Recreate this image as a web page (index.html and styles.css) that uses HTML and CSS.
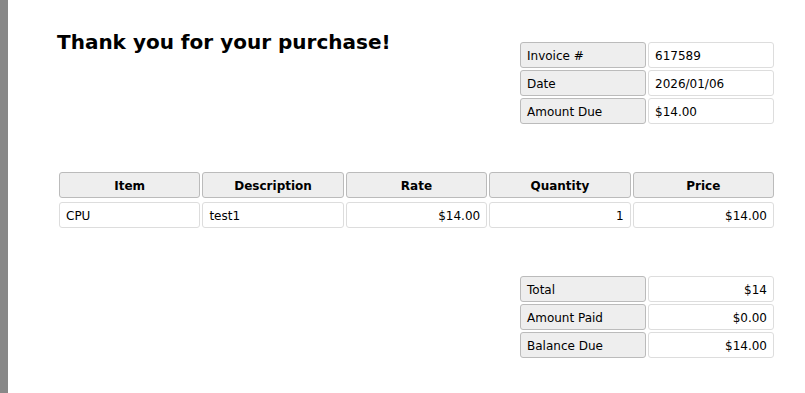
FILE: index.html
```html
<!DOCTYPE html>
<html lang="en">
<head>
  <meta charset="UTF-8">
  <title>Invoice 617589</title>
  <link rel="stylesheet" href="styles.css">
</head>
<body>
  <div class="rail"></div>

  <main class="page">
    <header class="top">
      <h1>Thank you for your purchase!</h1>

      <table class="meta">
        <tr><th>Invoice #</th><td>617589</td></tr>
        <tr><th>Date</th><td>2026/01/06</td></tr>
        <tr><th>Amount Due</th><td>$14.00</td></tr>
      </table>
    </header>

    <table class="items">
      <thead>
        <tr>
          <th>Item</th>
          <th>Description</th>
          <th>Rate</th>
          <th>Quantity</th>
          <th>Price</th>
        </tr>
      </thead>
      <tbody>
        <tr>
          <td>CPU</td>
          <td>test1</td>
          <td class="num">$14.00</td>
          <td class="num">1</td>
          <td class="num">$14.00</td>
        </tr>
      </tbody>
    </table>

    <table class="meta balance">
      <tr><th>Total</th><td class="num">$14</td></tr>
      <tr><th>Amount Paid</th><td class="num">$0.00</td></tr>
      <tr><th>Balance Due</th><td class="num">$14.00</td></tr>
    </table>
  </main>
</body>
</html>
```

FILE: styles.css
```css
* {
  box-sizing: border-box;
}
html, body {
  height: 100%;
}
body {
  margin: 0;
  display: flex;
  background: #fff;
  color: #000;
  font-family: "DejaVu Sans", sans-serif;
}
.rail {
  width: 8px;
  flex: none;
  background: #888;
}
.page {
  flex: 1;
  padding: 0 29px 0 49px;
}

.top {
  display: flex;
  justify-content: space-between;
  align-items: flex-start;
}
.top h1 {
  margin: 30px 0 0;
  font-size: 20px;
  font-weight: bold;
}

table {
  font-size: 12px;
  border-collapse: separate;
  border-spacing: 2px;
  table-layout: fixed;
}
th, td {
  height: 26px;
  padding: 1px 6px 0;
  border: 1px solid #ddd;
  border-radius: 3px;
  text-align: left;
  font-weight: normal;
}
th {
  background: #eee;
  border-color: #bbb;
}
td.num {
  text-align: right;
}

.meta {
  width: 258px;
  margin-top: 40px;
}

.items {
  width: 100%;
  margin-top: 46px;
  border-spacing: 2px 0;
}
.items thead th {
  font-weight: bold;
  text-align: center;
}
/* small gap between the header row and the line items */
.items tbody::before {
  content: "";
  display: table-row;
  height: 4px;
}

.balance {
  margin: 46px 0 0 auto;
}
```
